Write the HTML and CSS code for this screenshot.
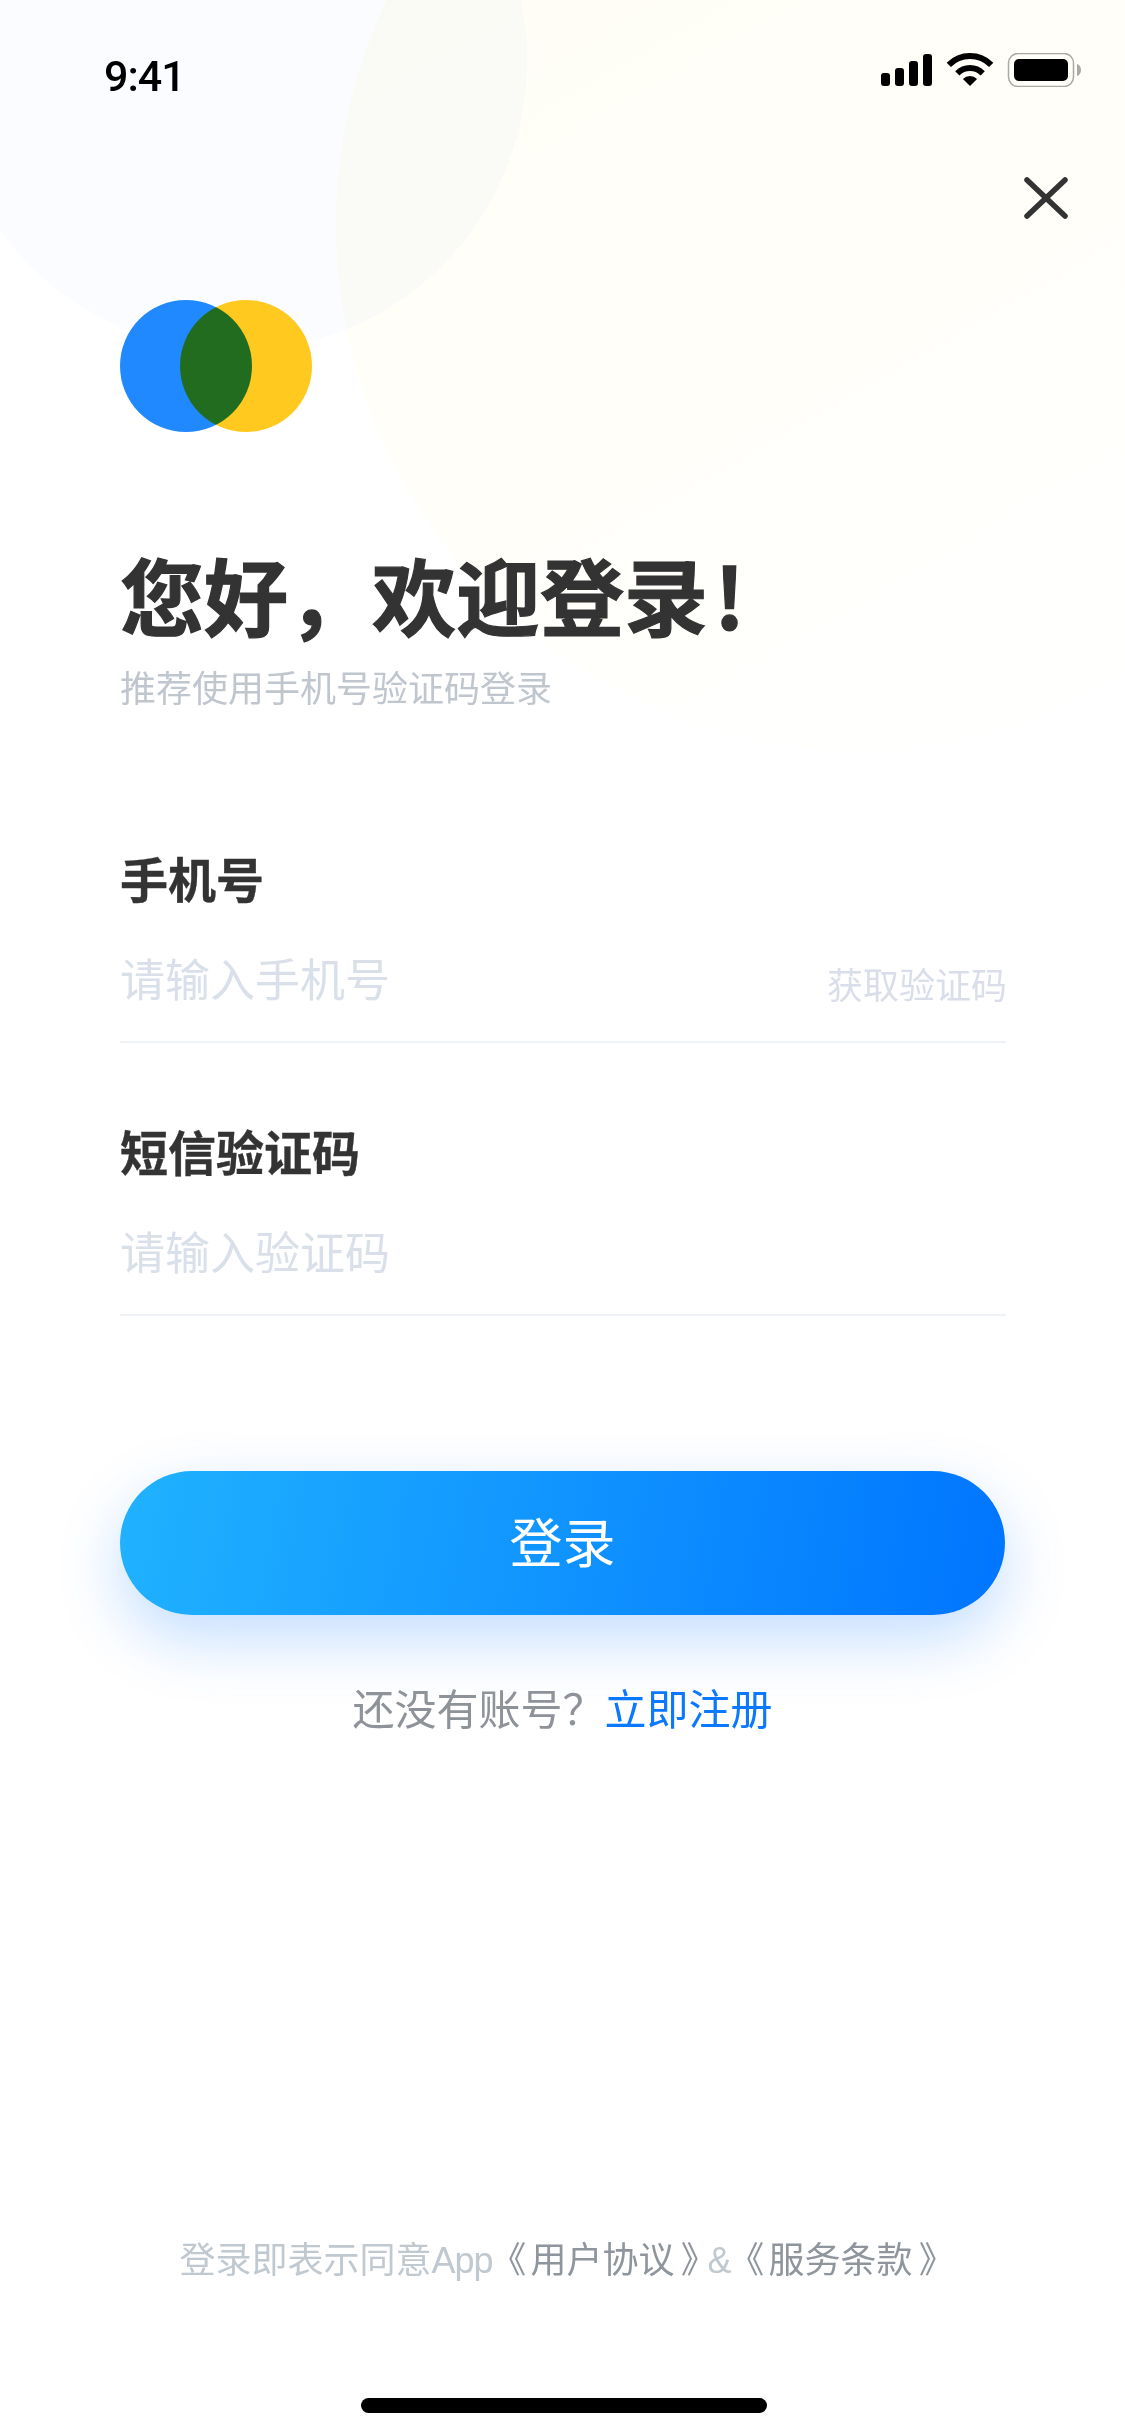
FILE: index.html
```html
<!DOCTYPE html>
<html lang="zh-CN">
<head>
<meta charset="utf-8">
<title>登录</title>
<link rel="stylesheet" href="styles.css">
</head>
<body>
<div class="page">
  <div class="blob blob-yellow"></div>
  <div class="blob blob-blue"></div>
  <div class="content">
    <div class="status">
      <span class="time">9:41</span>
      <svg class="status-icons" width="200" height="34" viewBox="0 0 200 34">
        <rect x="0" y="20" width="9" height="13" rx="3" fill="#000"/>
        <rect x="14" y="15" width="9" height="18" rx="3" fill="#000"/>
        <rect x="28" y="8" width="9" height="25" rx="3" fill="#000"/>
        <rect x="42" y="1" width="9" height="32" rx="3" fill="#000"/>
        <path d="M67.8 11.8A30 30 0 0 1 110.2 11.8M76.3 20.3A18 18 0 0 1 101.7 20.3" fill="none" stroke="#000" stroke-width="6"/>
        <path d="M89 33L81.9 25.9A10 10 0 0 1 96.1 25.9Z" fill="#000"/>
        <rect x="127.5" y="0.5" width="65" height="33" rx="9.5" fill="none" stroke="#a9a9a5" stroke-width="1.5"/>
        <rect x="133" y="6" width="54" height="22" rx="5" fill="#000"/>
        <path d="M196 11c2.6.8 4 3 4 6s-1.400 5.200-4 6z" fill="#a9a9a5"/>
      </svg>
    </div>
    <div class="close-row">
      <svg width="44" height="42" viewBox="0 0 44 42">
        <path d="M3 3L41 39M41 3L3 39" fill="none" stroke="#333" stroke-width="5.500" stroke-linecap="round"/>
      </svg>
    </div>
    <svg class="logo" width="192" height="132" viewBox="0 0 192 132">
      <circle class="logo-part" cx="66" cy="66" r="66" fill="#2189ff"/>
      <circle class="logo-part" cx="126" cy="66" r="66" fill="#ffc91f"/>
    </svg>
    <h1 class="title">您好&#xFF0C;欢迎登录<span class="bang">!</span></h1>
    <p class="subtitle">推荐使用手机号验证码登录</p>
    <section class="field field-first">
      <div class="label">手机号</div>
      <div class="input-row">
        <span class="placeholder">请输入手机号</span>
        <span class="get-code">获取验证码</span>
      </div>
    </section>
    <section class="field">
      <div class="label">短信验证码</div>
      <div class="input-row">
        <span class="placeholder">请输入验证码</span>
      </div>
    </section>
    <div class="login-btn">登录</div>
    <p class="signup">还没有账号&#xFF1F;<span class="link">立即注册</span></p>
    <p class="terms">登录即表示同意<span class="latin">App</span><span class="term-link"><span class="open">《</span>用户协议<span class="shut">》</span></span><span class="latin">&amp;</span><span class="term-link"><span class="open">《</span>服务条款<span class="shut">》</span></span></p>
    <div class="home-indicator"></div>
  </div>
</div>
</body>
</html>
```

FILE: styles.css
```css
* {
  box-sizing: border-box;
}

html,
body {
  margin: 0;
  padding: 0;
  background: #fff;
}

.page {
  position: relative;
  width: 1125px;
  height: 2436px;
  overflow: hidden;
  background: #fff;
  font-family: "Noto Sans CJK SC", "Noto Sans", sans-serif;
}

.blob {
  position: absolute;
  border-radius: 50%;
}

.blob-yellow {
  left: 336px;
  top: -300px;
  width: 1050px;
  height: 1050px;
  background: linear-gradient(150deg, #fffdf3 0%, #fffef8 45%, #ffffff 90%);
}

.blob-blue {
  left: -55px;
  top: -231px;
  width: 582px;
  height: 582px;
  background: #fafcff;
  mix-blend-mode: multiply;
}

.content {
  position: relative;
  display: flex;
  flex-direction: column;
}

.status {
  display: flex;
  justify-content: space-between;
  align-items: flex-start;
  padding: 53px 44px 0 104px;
}

.time {
  font-family: Roboto, sans-serif;
  font-size: 43px;
  font-weight: 500;
  line-height: 46px;
  letter-spacing: -1px;
  color: #000;
}

.status-icons {
  display: block;
}

.close-row {
  display: flex;
  justify-content: flex-end;
  margin-top: 78px;
  padding-right: 57px;
}

.close-row svg {
  display: block;
}

.logo {
  display: block;
  margin: 81px 0 0 120px;
  isolation: isolate;
}

.logo-part {
  mix-blend-mode: multiply;
}

.title {
  margin: 112px 0 0 120px;
  font-size: 84px;
  font-weight: 700;
  line-height: 100px;
  color: #333;
  -webkit-text-stroke: 1.2px #333;
}

.bang {
  margin-left: 6px;
}

.subtitle {
  margin: 17px 0 0 120px;
  font-size: 36px;
  line-height: 50px;
  color: #c0c6ce;
}

.field {
  margin: 77px 119px 0 120px;
}

.field-first {
  margin-top: 136px;
}

.label {
  padding-bottom: 3px;
  font-size: 48px;
  font-weight: 700;
  line-height: 60px;
  color: #333;
  -webkit-text-stroke: 0.4px #333;
}

.input-row {
  display: flex;
  justify-content: space-between;
  align-items: center;
  padding: 38px 0 33px;
  border-bottom: 2px solid #eff2f6;
}

.placeholder {
  font-size: 45px;
  line-height: 60px;
  color: #d9e0e9;
}

.get-code {
  margin: 10px -1px 0 0;
  font-size: 36px;
  line-height: 40px;
  color: #dadeea;
}

.login-btn {
  display: flex;
  justify-content: center;
  align-items: center;
  height: 144px;
  margin: 155px 120px 0;
  padding-bottom: 6px;
  border-radius: 72px;
  background: linear-gradient(100deg, #20b2ff 0%, #0075ff 100%);
  box-shadow: 0 24px 64px rgba(0, 117, 255, 0.24);
  font-size: 53px;
  color: #fff;
}

.signup {
  margin: 62px 0 0;
  text-align: center;
  font-size: 42px;
  line-height: 60px;
  color: #8e9299;
}

.link {
  color: #0a78ff;
}

.terms {
  margin: 495px 0 0;
  text-align: center;
  font-size: 36px;
  line-height: 50px;
  color: #c0c8d0;
}

.latin {
  font-family: "Liberation Sans", sans-serif;
  letter-spacing: -1px;
}

.term-link {
  color: #8f959c;
}

.open,
.shut {
  font-feature-settings: "palt";
}

.open {
  padding: 0 5px 0 15px;
}

.shut {
  padding: 0 8px 0 7px;
}

.home-indicator {
  width: 406px;
  height: 15px;
  margin: 112px 0 0 361px;
  border-radius: 8px;
  background: #000;
}
```
